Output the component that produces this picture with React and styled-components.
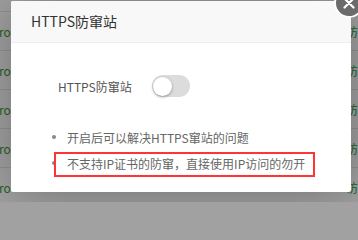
import { useState } from "react"
import styled, { createGlobalStyle } from "styled-components"

const GlobalStyle = createGlobalStyle`
  html, body {
    margin: 0;
    padding: 0;
    overflow: hidden;
    background: #a1a1a1;
  }
  body {
    font-family: "Noto Sans CJK SC", "Liberation Sans", sans-serif;
  }
`

const Page = styled.div`
  position: relative;
  width: 358px;
  height: 202px;
  overflow: hidden;
  background: #fff;
`

const Table = styled.div`
  display: flex;
  flex-direction: column;
  padding-top: 11px;
`

const Row = styled.div`
  height: 38px;
  border-top: 1px solid #e6e6e6;
  display: flex;
  align-items: center;
  justify-content: space-between;
  font-size: 12px;
  overflow: hidden;
`

const LeftCell = styled.span`
  margin-left: -1px;
  color: #3c9a2e;
`

const RightCell = styled.span`
  width: 12px;
  overflow: hidden;
  white-space: nowrap;
  direction: rtl;
  color: #20a53a;
`

const Shade = styled.div`
  position: absolute;
  inset: 0;
  background: rgba(0, 0, 0, 0.37);
`

const Modal = styled.div`
  position: absolute;
  left: 11px;
  top: 1px;
  width: 340px;
  height: 191px;
  background: #fff;
  border-radius: 2px;
  box-shadow: 1px 1px 50px rgba(0, 0, 0, 0.3);
`

const Header = styled.div`
  height: 41px;
  line-height: 41px;
  padding-left: 20px;
  background: #f8f8f8;
  border-bottom: 1px solid #eee;
  border-radius: 2px 2px 0 0;
  font-size: 14px;
  color: #333;
`

const Close = styled.button`
  position: absolute;
  top: -13px;
  right: -13px;
  width: 30px;
  height: 30px;
  padding: 0;
  border: 2px solid #fff;
  border-radius: 50%;
  background: #6b6b6b;
  display: flex;
  align-items: center;
  justify-content: center;
  cursor: pointer;
`

const Body = styled.div`
  padding: 32px 0 0 47px;
`

const SwitchRow = styled.div`
  display: flex;
  align-items: center;
  gap: 20px;
  height: 22px;
`

const Label = styled.span`
  font-size: 12px;
  color: #555;
`

const Track = styled.div`
  position: relative;
  width: 38px;
  height: 22px;
  border-radius: 11px;
  background: ${({ $on }) => ($on ? "#20a53a" : "#dcdcdc")};
  cursor: pointer;
`

const Knob = styled.div`
  position: absolute;
  top: 1.5px;
  left: ${({ $on }) => ($on ? "18px" : "1.5px")};
  width: 19px;
  height: 19px;
  border-radius: 50%;
  background: #fff;
  box-shadow: 0 1px 3px rgba(0, 0, 0, 0.35);
`

const Tips = styled.ul`
  margin: 27px 0 0 -6px;
  padding: 0;
  list-style: none;
`

const Tip = styled.li`
  display: flex;
  align-items: center;
  height: 26px;
  font-size: 12px;
  color: #666;

  &::before {
    content: "";
    width: 4px;
    height: 4px;
    border-radius: 50%;
    background: #888;
    margin-right: 11px;
  }
`

const Mark = styled.div`
  position: absolute;
  left: 43px;
  top: 151px;
  width: 261px;
  height: 25px;
  border: 2px solid #ff3434;
  box-sizing: border-box;
  pointer-events: none;
`

const rows = [0, 1, 2, 3, 4]

const App = () => {
  const [on, setOn] = useState(false)

  return (
    <Page>
      <GlobalStyle />
      <Table>
        {rows.map((r) => (
          <Row key={r}>
            <LeftCell>ro</LeftCell>
            <RightCell>访</RightCell>
          </Row>
        ))}
      </Table>
      <Shade />
      <Modal>
        <Header>HTTPS防窜站</Header>
        <Close aria-label="关闭">
          <svg width="12" height="12" viewBox="0 0 12 12" aria-hidden="true">
            <path d="M1.5 1.5 L10.5 10.5 M10.5 1.5 L1.5 10.5" stroke="#fff" strokeWidth="2.2" strokeLinecap="round" />
          </svg>
        </Close>
        <Body>
          <SwitchRow>
            <Label>HTTPS防窜站</Label>
            <Track $on={on} onClick={() => setOn(!on)}>
              <Knob $on={on} />
            </Track>
          </SwitchRow>
          <Tips>
            <Tip>开启后可以解决HTTPS窜站的问题</Tip>
            <Tip>不支持IP证书的防窜，直接使用IP访问的勿开</Tip>
          </Tips>
        </Body>
        <Mark />
      </Modal>
    </Page>
  )
}

export default App
